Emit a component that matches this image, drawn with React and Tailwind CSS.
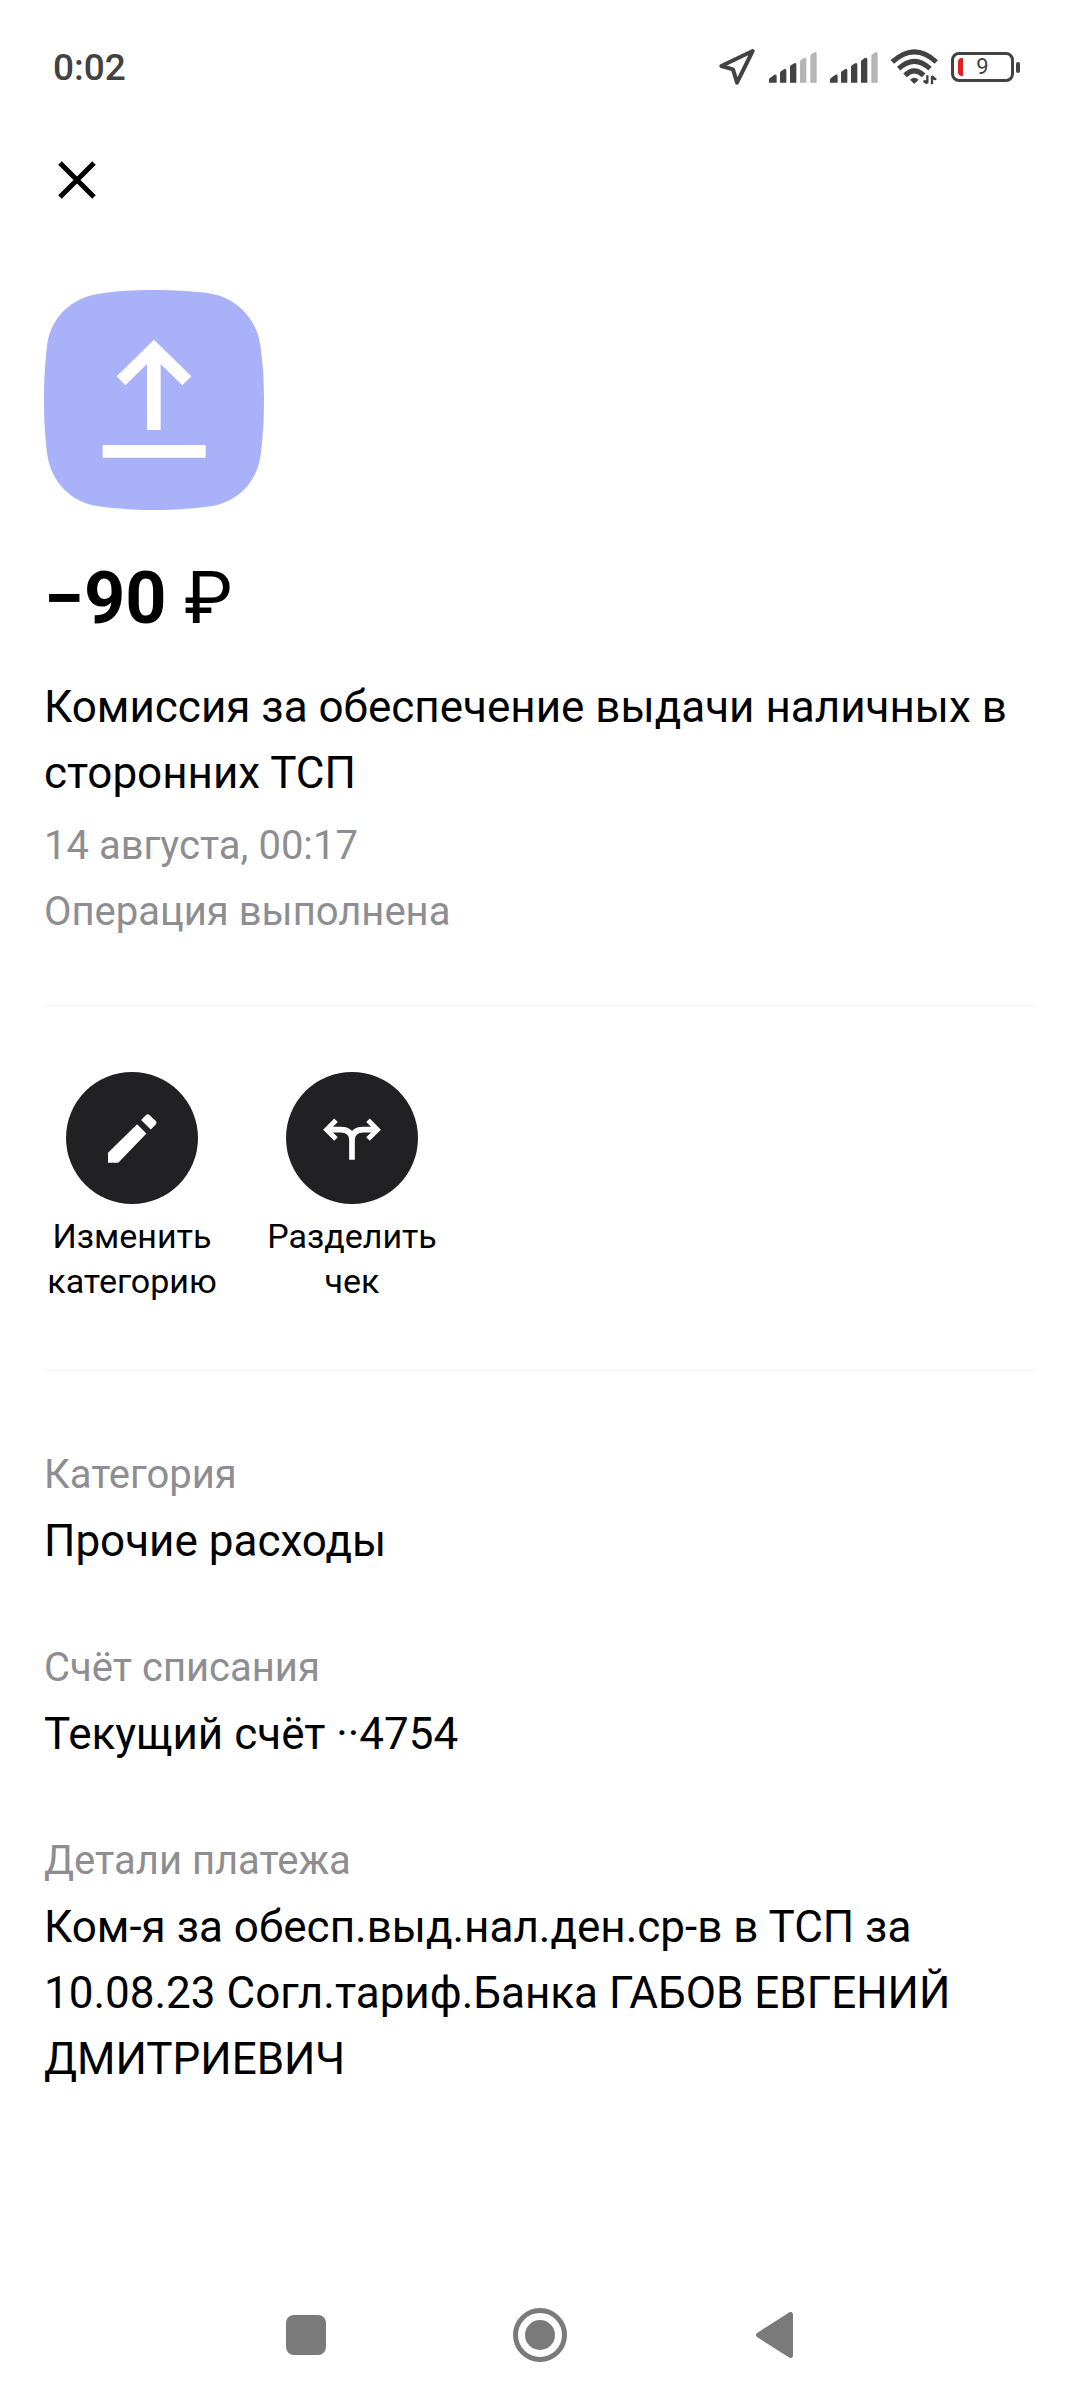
const ROBOTO = "font-['Roboto','Noto_Sans',sans-serif]";

const details = [
  { label: 'Категория', value: 'Прочие расходы' },
  { label: 'Счёт списания', value: 'Текущий счёт ··4754' },
  {
    label: 'Детали платежа',
    value: 'Ком-я за обесп.выд.нал.ден.ср-в в ТСП за 10.08.23 Согл.тариф.Банка ГАБОВ ЕВГЕНИЙ ДМИТРИЕВИЧ',
  },
];

function LocationIcon() {
  return (
    <svg viewBox="0 0 114 114" className="h-[38px] w-[38px]" fill="none" stroke="currentColor">
      <path d="M104 9 L10 54 L45 64 L57 104 Z" strokeWidth="12" strokeLinejoin="round" />
    </svg>
  );
}

function SignalIcon({ level }) {
  const bars = [
    'M0 92 V83 Q0 80 3 78 L15 69 Q23 65 23 73 V92 Z',
    'M33 92 V63 Q33 60 36 58 L43 53 Q52 47 52 56 V92 Z',
    'M63 92 V45 Q63 42 66 40 L73 35 Q82 30 82 38 V92 Z',
    'M93 92 V29 Q93 26 96 24 L103 19 Q112 14 112 22 V92 Z',
    'M124 92 V13 Q124 9 127 7 L134 2 Q143 -3 143 6 V92 Z',
  ];
  return (
    <svg viewBox="0 0 144 93" className="h-[31px] w-[48px]">
      {bars.map((d, i) => (
        <path key={d} d={d} fill={i < level ? '#424242' : '#b5b5b5'} />
      ))}
    </svg>
  );
}

function WifiIcon() {
  return (
    <svg viewBox="0 0 141 108" className="h-[36px] w-[47px]" fill="none" stroke="currentColor">
      <path d="M4 39 Q70 -22 136 39" strokeWidth="15" />
      <path d="M23 59 Q70 15 117 59" strokeWidth="15" />
      <path d="M42 79 Q70 52 98 79" strokeWidth="15" />
      <path d="M57 92 Q70 80 83 92 L73 102 Q70 105 67 102 Z" fill="currentColor" stroke="none" />
      <path d="M109 79 V103 M109 103 L98 97 M123 106 V81 M123 82 L135 92" strokeWidth="7" />
      <path d="M96 94 H109 V106 Z M123 79 V92 H137 Z" fill="currentColor" stroke="none" />
    </svg>
  );
}

function Battery({ percent }) {
  return (
    <div className="flex items-center gap-0.5">
      <div className="flex h-[30px] w-[63px] items-center rounded-lg border-3 border-[#424242] px-1">
        <span className="h-[18px] w-[5px] rounded-l-sm bg-[#e02020]" />
        <span className="flex-1 text-center text-[22px] leading-6">{percent}</span>
        <span className="w-[5px]" />
      </div>
      <span className="h-[11px] w-1 rounded-xs bg-[#424242]" />
    </div>
  );
}

function StatusBar() {
  return (
    <header className="flex h-[134px] items-center justify-between pr-[60px] pl-[53px] text-[#424242]">
      <span className="pt-0.5 text-[37px] leading-[44px] font-medium">0:02</span>
      <div className="flex items-center gap-[13px]">
        <LocationIcon />
        <SignalIcon level={3} />
        <SignalIcon level={4} />
        <WifiIcon />
        <Battery percent={9} />
      </div>
    </header>
  );
}

function CategoryTile() {
  return (
    <svg viewBox="0 0 660 660" className="h-[220px] w-[220px]">
      <path
        d="M330 0 C390 0 440 3 490 9 C575 20 636 84 648 160 C657 220 660 270 660 330 C660 390 657 440 650 495 C640 575 580 638 498 649 C440 657 390 660 330 660 C270 660 220 657 165 649 C80 638 22 575 10 495 C3 440 0 390 0 330 C0 270 3 220 10 160 C22 84 80 23 165 11 C220 3 270 0 330 0 Z"
        fill="#a9b2f9"
      />
      <path
        d="M330 149 L442 259 L415 286 L350 222 V420 H309 V222 L244 286 L218 259 Z M176 465 H485 V503 H176 Z"
        fill="#fff"
      />
    </svg>
  );
}

function PencilIcon() {
  return (
    <svg viewBox="0 0 148 148" className="h-[49px] w-[49px]" fill="currentColor">
      <path d="M0 147 V117 L88 31 L116 59 L31 147 Z" />
      <path d="M100 18 L114 4 Q120 -2 126 4 L143 20 Q150 27 143 33 L129 47 Z" />
    </svg>
  );
}

function SplitIcon() {
  return (
    <svg viewBox="0 -4 174 130" className="h-[44px] w-[58px]" fill="none" stroke="currentColor">
      <path d="M87 126 V68 Q87 36 53 36 H14 M87 68 Q87 36 121 36 H160" strokeWidth="17" />
      <path d="M39 8 L11 36 L39 64 M135 8 L163 36 L135 64" strokeWidth="15" />
    </svg>
  );
}

function Action({ icon, children }) {
  return (
    <button className="flex w-44 flex-col items-center gap-[10px]">
      <span className="flex h-33 w-33 items-center justify-center rounded-full bg-[#212123] text-white">
        {icon}
      </span>
      <span className="text-[34px] leading-[45px]">{children}</span>
    </button>
  );
}

function NavBar() {
  return (
    <nav className="flex h-[130px] items-center justify-center text-[#7a7a7a]">
      <button aria-label="Недавние" className="flex w-[234px] justify-center">
        <span className="h-10 w-10 rounded-lg bg-current" />
      </button>
      <button aria-label="Домой" className="flex w-[234px] justify-center">
        <span className="flex h-[54px] w-[54px] items-center justify-center rounded-full border-5 border-current">
          <span className="h-[30px] w-[30px] rounded-full bg-current" />
        </span>
      </button>
      <button aria-label="Назад" className="flex w-[234px] justify-center">
        <svg viewBox="0 0 37 46" className="h-[46px] w-[37px]" fill="currentColor" stroke="currentColor">
          <path d="M34.5 2.5 V43.5 L2.5 23 Z" strokeWidth="5" strokeLinejoin="round" />
        </svg>
      </button>
    </nav>
  );
}

export default function App() {
  return (
    <div className={`flex min-h-screen flex-col bg-white text-black ${ROBOTO}`}>
      <StatusBar />

      <main className="flex-1 px-11">
        <button aria-label="Закрыть" className="flex h-[92px] w-[66px] items-center justify-center">
          <svg viewBox="0 0 38 38" className="h-[38px] w-[38px]" fill="none" stroke="currentColor">
            <path d="M2 2 L36 36 M36 2 L2 36" strokeWidth="5" />
          </svg>
        </button>

        <div className="mt-16">
          <CategoryTile />
        </div>

        <h1 className="mt-[45px] text-[72px] leading-[88px] font-bold">
          −90 <span className="font-normal">₽</span>
        </h1>
        <p className="mt-[31px] text-[44px] leading-[66px]">
          Комиссия за обеспечение выдачи наличных в сторонних ТСП
        </p>
        <div className="mt-[7px] text-[40px] leading-[66px] text-[#8e8e92]">
          <p>14 августа, 00:17</p>
          <p>Операция выполнена</p>
        </div>

        <div className="mt-15 flex gap-11 border-y border-[#f3f3f3] py-[66px]">
          <Action icon={<PencilIcon />}>Изменить категорию</Action>
          <Action icon={<SplitIcon />}>
            Разделить
            <br />
            чек
          </Action>
        </div>

        <dl className="mt-[71px] flex flex-col gap-[61px]">
          {details.map((d) => (
            <div key={d.label}>
              <dt className="text-[40px] leading-[66px] text-[#8e8e92]">{d.label}</dt>
              <dd className="text-[44px] leading-[66px]">{d.value}</dd>
            </div>
          ))}
        </dl>
      </main>

      <NavBar />
    </div>
  );
}
